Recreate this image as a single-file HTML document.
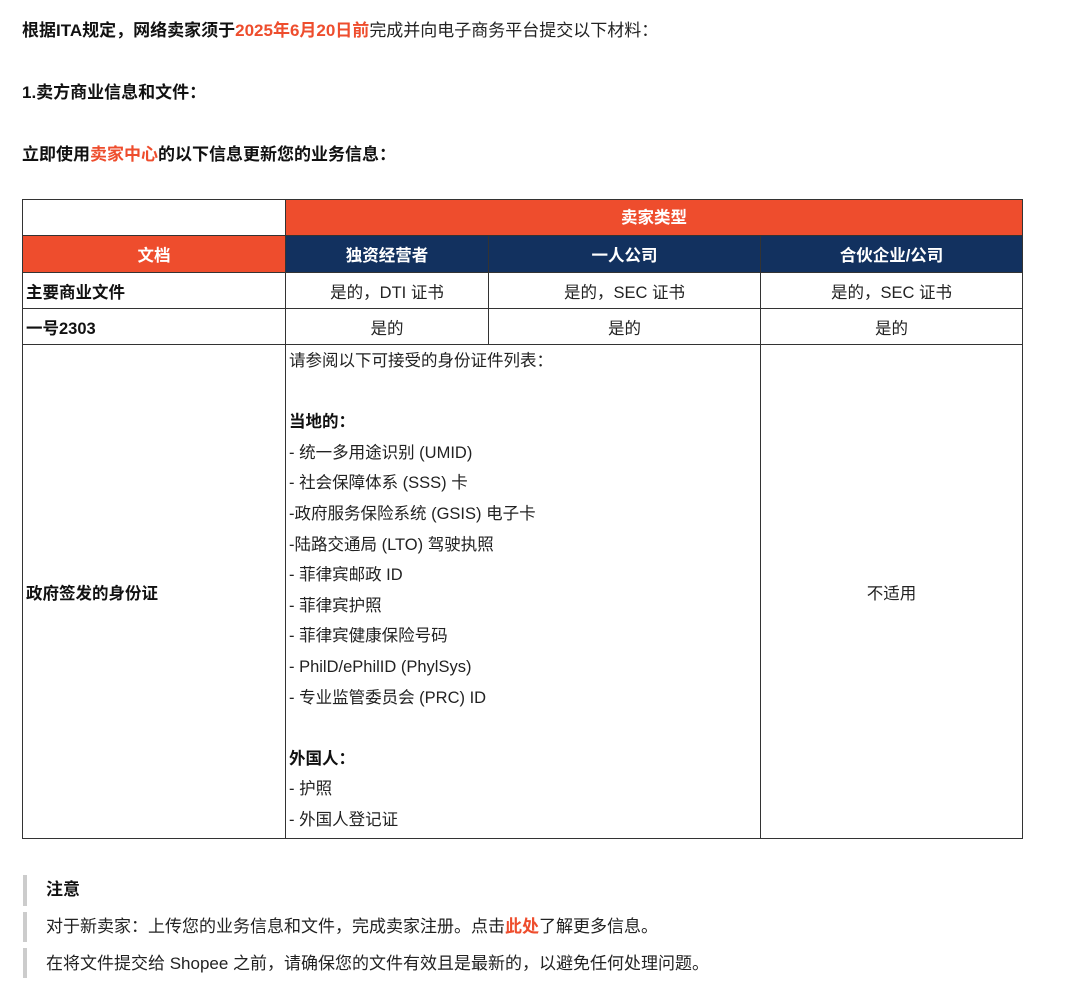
<!DOCTYPE html>
<html><head><meta charset="utf-8"><style>
body{margin:0;width:1080px;height:985px;background:#fff;font-family:"Liberation Sans","Noto Sans CJK SC",sans-serif;color:#222;font-size:17px;position:relative;overflow:hidden}
.a{position:absolute;white-space:nowrap;line-height:20px}
b{font-weight:bold;color:#111}
.r{color:#ee4d2d;font-weight:bold}
table{position:absolute;left:22px;top:199px;border-collapse:collapse;table-layout:fixed}
td{border:1px solid #333;padding:0 3px;font-size:16.5px;color:#222;text-align:center}
.o{background:#ee4d2d;color:#fff;font-weight:bold}
.n{background:#12315f;color:#fff;font-weight:bold}
.l{text-align:left;font-weight:bold;color:#111}
.big{text-align:left;vertical-align:top;line-height:30.6px;padding-top:1px}
.bar{position:absolute;left:23px;width:4px;background:#ccc}
</style></head><body>
<div class="a" style="left:22px;top:21px"><b>根据ITA规定，网络卖家须于</b><span class="r">2025年6月20日前</span>完成并向电子商务平台提交以下材料：</div>
<div class="a" style="left:22px;top:83px"><b>1.卖方商业信息和文件：</b></div>
<div class="a" style="left:22px;top:145px"><b>立即使用</b><span class="r">卖家中心</span><b>的以下信息更新您的业务信息：</b></div>
<table>
<col style="width:263px"><col style="width:203px"><col style="width:272px"><col style="width:262px">
<tr style="height:36px"><td></td><td class="o" colspan="3" style="padding-bottom:3px">卖家类型</td></tr>
<tr style="height:37px"><td class="o">文档</td><td class="n">独资经营者</td><td class="n">一人公司</td><td class="n">合伙企业/公司</td></tr>
<tr style="height:36px"><td class="l">主要商业文件</td><td>是的，DTI 证书</td><td>是的，SEC 证书</td><td>是的，SEC 证书</td></tr>
<tr style="height:36px"><td class="l">一号2303</td><td>是的</td><td>是的</td><td>是的</td></tr>
<tr style="height:494px"><td class="l">政府签发的身份证</td><td class="big" colspan="2">请参阅以下可接受的身份证件列表：<br><br><b>当地的：</b><br>- 统一多用途识别 (UMID)<br>- 社会保障体系 (SSS) 卡<br>-政府服务保险系统 (GSIS) 电子卡<br>-陆路交通局 (LTO) 驾驶执照<br>- 菲律宾邮政 ID<br>- 菲律宾护照<br>- 菲律宾健康保险号码<br>- PhilD/ePhilID (PhylSys)<br>- 专业监管委员会 (PRC) ID<br><br><b>外国人：</b><br>- 护照<br>- 外国人登记证</td><td>不适用</td></tr>
</table>
<div class="bar" style="top:875px;height:31px"></div>
<div class="bar" style="top:912px;height:30px"></div>
<div class="bar" style="top:948px;height:30px"></div>
<div class="a" style="left:46px;top:880px"><b>注意</b></div>
<div class="a" style="left:46px;top:917px">对于新卖家：上传您的业务信息和文件，完成卖家注册。点击<span class="r">此处</span>了解更多信息。</div>
<div class="a" style="left:46px;top:954px">在将文件提交给 Shopee 之前，请确保您的文件有效且是最新的，以避免任何处理问题。</div>
</body></html>
